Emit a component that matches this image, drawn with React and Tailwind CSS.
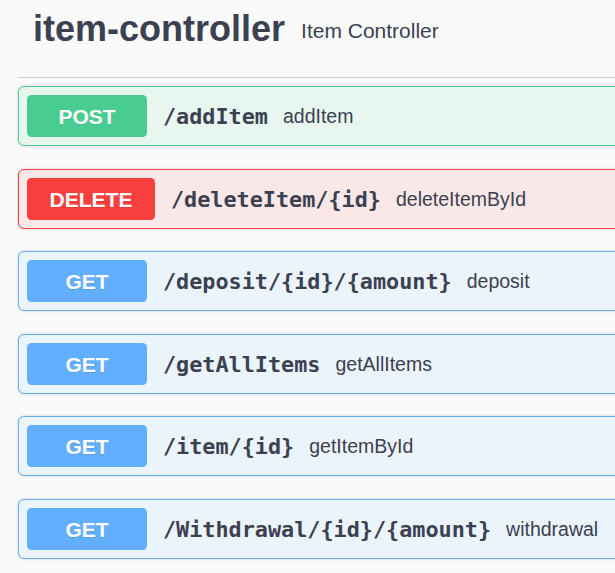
import React from "react";

const ops = [
  { m: "POST", path: "/addItem", desc: "addItem", kind: "post" },
  { m: "DELETE", path: "/deleteItem/{id}", desc: "deleteItemById", kind: "delete" },
  { m: "GET", path: "/deposit/{id}/{amount}", desc: "deposit", kind: "get" },
  { m: "GET", path: "/getAllItems", desc: "getAllItems", kind: "get" },
  { m: "GET", path: "/item/{id}", desc: "getItemById", kind: "get" },
  { m: "GET", path: "/Withdrawal/{id}/{amount}", desc: "withdrawal", kind: "get" },
];

const styles = {
  post: { block: "border-[#49cc90] bg-[#e8f6f0]", btn: "bg-[#49cc90] w-[120px]" },
  delete: { block: "border-[#f93e3e] bg-[#fae7e7]", btn: "bg-[#f93e3e] w-[128px]" },
  get: { block: "border-[#61affe] bg-[#ebf3fb]", btn: "bg-[#61affe] w-[120px]" },
};

function Op({ op }) {
  const s = styles[op.kind];
  return (
    <div
      className={`flex items-center h-[60px] mb-[22.5px] border rounded-[6px] px-[8px] shadow-[0_0_3px_rgba(0,0,0,0.19)] ${s.block}`}
    >
      <div
        className={`${s.btn} h-[42px] shrink-0 rounded-[4.5px] flex items-center justify-center pt-[2px] text-white font-bold text-[21px] [text-shadow:0_1px_0_rgba(0,0,0,0.1)]`}
        style={{ fontFamily: '"Liberation Sans", Arial, sans-serif' }}
      >
        {op.m}
      </div>
      <span
        className="pl-[16px] pr-[15px] mt-[3px] text-[21.8px] font-bold text-[#3b4151] whitespace-nowrap"
        style={{ fontFamily: '"DejaVu Sans Mono", monospace' }}
      >
        {op.path}
      </span>
      <span
        className="text-[19.5px] mt-[2px] text-[#3b4151] whitespace-nowrap"
        style={{ fontFamily: '"Liberation Sans", Arial, sans-serif' }}
      >
        {op.desc}
      </span>
    </div>
  );
}

export default function App() {
  return (
    <div
      className="w-[615px] h-[573px] overflow-hidden bg-[#fafafa]"
      style={{ fontFamily: '"Liberation Sans", Arial, sans-serif' }}
    >
      <div className="ml-[18px] w-[800px]">
        <div className="flex items-center gap-[16px] pl-[15px] pt-[8px] pb-[27px] border-b border-[#cdced2]">
          <span className="text-[36px] font-bold leading-[42px] text-[#3b4151]">item-controller</span>
          <span className="text-[21px] text-[#3b4151] mt-[3px]">Item Controller</span>
        </div>
        <div className="pt-[8px]">
          {ops.map((op) => (
            <Op key={op.path} op={op} />
          ))}
        </div>
      </div>
    </div>
  );
}
